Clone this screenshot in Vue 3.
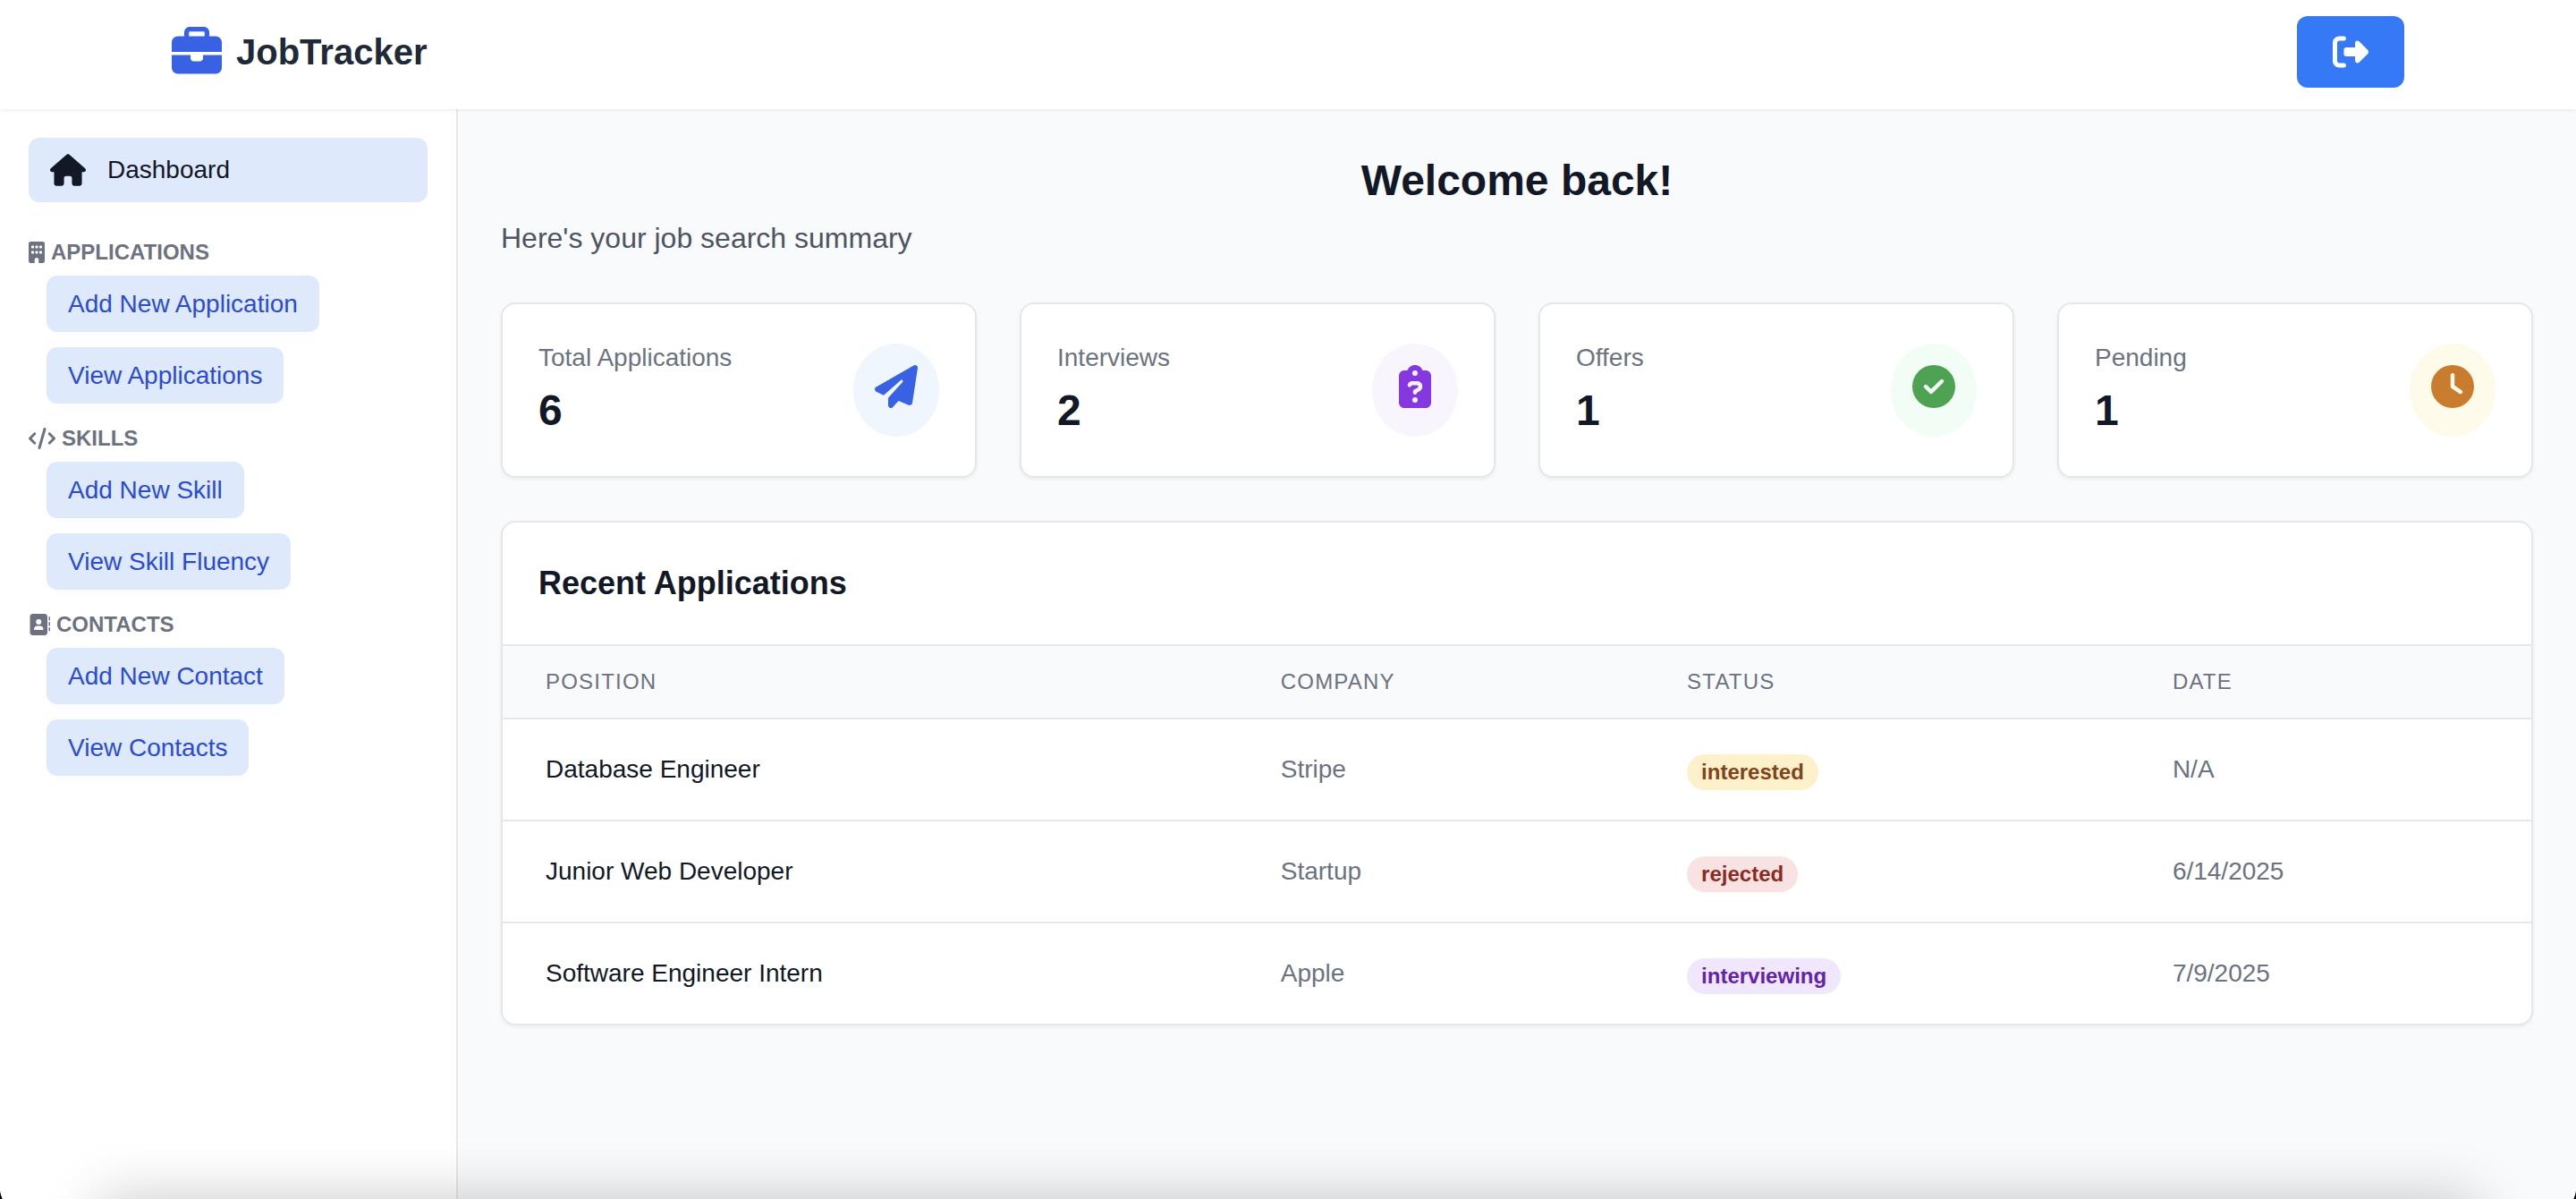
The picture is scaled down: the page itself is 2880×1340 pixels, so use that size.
<script setup>
const icons = {
  briefcase: {
    box: '0 0 512 512',
    d: 'M184 48l144 0c4.4 0 8 3.6 8 8l0 40L176 96l0-40c0-4.4 3.6-8 8-8zm-56 8l0 40L64 96C28.7 96 0 124.7 0 160l0 96 192 0 128 0 192 0 0-96c0-35.3-28.7-64-64-64l-64 0 0-40c0-30.9-25.1-56-56-56L184 0c-30.9 0-56 25.1-56 56zM512 288l-192 0 0 32c0 17.7-14.3 32-32 32l-64 0c-17.7 0-32-14.3-32-32l0-32L0 288 0 416c0 35.3 28.7 64 64 64l384 0c35.3 0 64-28.7 64-64l0-128z',
  },
  logout: {
    box: '0 0 512 512',
    d: 'M377.9 105.9L500.7 228.7c7.2 7.2 11.3 17.1 11.3 27.3s-4.1 20.1-11.3 27.3L377.9 406.1c-6.4 6.4-15 9.9-24 9.9c-18.7 0-33.9-15.2-33.9-33.9l0-62.1-128 0c-17.7 0-32-14.3-32-32l0-64c0-17.7 14.3-32 32-32l128 0 0-62.1c0-18.7 15.2-33.9 33.9-33.9c9 0 17.6 3.6 24 9.9zM160 96L96 96c-17.7 0-32 14.3-32 32l0 256c0 17.7 14.3 32 32 32l64 0c17.7 0 32 14.3 32 32s-14.3 32-32 32l-64 0c-53 0-96-43-96-96L0 128C0 75 43 32 96 32l64 0c17.7 0 32 14.3 32 32s-14.3 32-32 32z',
  },
  house: {
    box: '0 0 576 512',
    d: 'M575.8 255.5c0 18-15 32.1-32 32.1h-32l.7 160.2c0 2.7-.2 5.4-.5 8.1V472c0 22.1-17.9 40-40 40H456c-1.1 0-2.2 0-3.3-.1c-1.4 .1-2.8 .1-4.2 .1H416 392c-22.1 0-40-17.9-40-40V448 384c0-17.7-14.3-32-32-32H256c-17.7 0-32 14.3-32 32v64 24c0 22.1-17.9 40-40 40H160 128.1c-1.5 0-3-.1-4.5-.2c-1.2 .1-2.4 .2-3.6 .2H104c-22.1 0-40-17.9-40-40V360c0-.9 0-1.9 .1-2.8V287.6H32c-18 0-32-14-32-32.1c0-9 3-17 10-24L266.4 8c7-7 15-8 22-8s15 2 21 7L564.8 231.5c8 7 12 15 11 24z',
  },
}

const sections = [
  {
    title: 'APPLICATIONS',
    box: '0 0 384 512',
    width: 18,
    d: 'M48 0C21.5 0 0 21.5 0 48L0 464c0 26.5 21.5 48 48 48l96 0 0-80c0-26.5 21.5-48 48-48s48 21.5 48 48l0 80 96 0c26.5 0 48-21.5 48-48l0-416c0-26.5-21.5-48-48-48L48 0zM64 240c0-8.8 7.2-16 16-16l32 0c8.8 0 16 7.2 16 16l0 32c0 8.8-7.2 16-16 16l-32 0c-8.8 0-16-7.2-16-16l0-32zm112-16l32 0c8.8 0 16 7.2 16 16l0 32c0 8.8-7.2 16-16 16l-32 0c-8.8 0-16-7.2-16-16l0-32c0-8.8 7.2-16 16-16zm80 16c0-8.8 7.2-16 16-16l32 0c8.8 0 16 7.2 16 16l0 32c0 8.8-7.2 16-16 16l-32 0c-8.8 0-16-7.2-16-16l0-32zM80 96l32 0c8.8 0 16 7.2 16 16l0 32c0 8.8-7.2 16-16 16l-32 0c-8.8 0-16-7.2-16-16l0-32c0-8.8 7.2-16 16-16zm80 16c0-8.8 7.2-16 16-16l32 0c8.8 0 16 7.2 16 16l0 32c0 8.8-7.2 16-16 16l-32 0c-8.8 0-16-7.2-16-16l0-32zM272 96l32 0c8.8 0 16 7.2 16 16l0 32c0 8.8-7.2 16-16 16l-32 0c-8.8 0-16-7.2-16-16l0-32c0-8.8 7.2-16 16-16z',
    links: ['Add New Application', 'View Applications'],
  },
  {
    title: 'SKILLS',
    box: '0 0 640 512',
    width: 30,
    d: 'M392.8 1.2c-17-4.9-34.7 5-39.6 22l-128 448c-4.9 17 5 34.7 22 39.6s34.7-5 39.6-22l128-448c4.9-17-5-34.7-22-39.6zm80.6 120.1c-12.5 12.5-12.5 32.8 0 45.3L562.7 256l-89.4 89.4c-12.5 12.5-12.5 32.8 0 45.3s32.8 12.5 45.3 0l112-112c12.5-12.5 12.5-32.8 0-45.3l-112-112c-12.5-12.5-32.8-12.5-45.3 0zm-306.7 0c-12.5-12.5-32.8-12.5-45.3 0l-112 112c-12.5 12.5-12.5 32.8 0 45.3l112 112c12.5 12.5 32.8 12.5 45.3 0s12.5-32.8 0-45.3L77.3 256l89.4-89.4c12.5-12.5 12.5-32.8 0-45.3z',
    links: ['Add New Skill', 'View Skill Fluency'],
  },
  {
    title: 'CONTACTS',
    box: '0 0 512 512',
    width: 24,
    d: 'M96 0C60.7 0 32 28.7 32 64l0 384c0 35.3 28.7 64 64 64l288 0c35.3 0 64-28.7 64-64l0-384c0-35.3-28.7-64-64-64L96 0zM208 288l64 0c44.2 0 80 35.8 80 80c0 8.8-7.2 16-16 16l-192 0c-8.8 0-16-7.2-16-16c0-44.2 35.8-80 80-80zm-32-96a64 64 0 1 1 128 0 64 64 0 1 1 -128 0zM512 80c0-8.8-7.2-16-16-16s-16 7.2-16 16l0 64c0 8.8 7.2 16 16 16s16-7.2 16-16l0-64zM496 192c-8.8 0-16 7.2-16 16l0 64c0 8.8 7.2 16 16 16s16-7.2 16-16l0-64c0-8.8-7.2-16-16-16zm16 144c0-8.8-7.2-16-16-16s-16 7.2-16 16l0 64c0 8.8 7.2 16 16 16s16-7.2 16-16l0-64z',
    links: ['Add New Contact', 'View Contacts'],
  },
]

const stats = [
  {
    label: 'Total Applications',
    value: 6,
    tone: 'blue',
    box: '0 0 512 512',
    d: 'M498.1 5.6c10.1 7 15.4 19.1 13.5 31.2l-64 416c-1.5 9.7-7.4 18.2-16 23s-18.9 5.4-28 1.6L284 427.7l-68.5 74.1c-8.9 9.7-22.9 12.9-35.2 8.1S160 493.2 160 480l0-83.6c0-4 1.5-7.8 4.2-10.8L331.8 202.8c5.8-6.3 5.6-16-.4-22s-15.7-6.4-22-.7L106 360.8 17.7 316.6C7.1 311.3 .3 300.7 0 288.9s5.9-22.8 16.1-28.7l448-256c10.7-6.1 23.9-5.5 34 1.4z',
  },
  {
    label: 'Interviews',
    value: 2,
    tone: 'purple',
    box: '0 0 384 512',
    d: 'M192 0c-41.8 0-77.4 26.7-90.5 64L64 64C28.7 64 0 92.7 0 128L0 448c0 35.3 28.7 64 64 64l256 0c35.3 0 64-28.7 64-64l0-320c0-35.3-28.7-64-64-64l-37.5 0C269.4 26.7 233.8 0 192 0zm0 64a32 32 0 1 1 0 64 32 32 0 1 1 0-64zM105.8 229.3c7.9-22.3 29.1-37.3 52.8-37.3l58.3 0c34.9 0 63.1 28.3 63.1 63.1c0 22.6-12.1 43.5-31.7 54.8L216 328.4c-.2 13-10.9 23.6-24 23.6c-13.3 0-24-10.7-24-24l0-13.5c0-8.6 4.6-16.5 12.1-20.8l44.3-25.4c4.7-2.7 7.6-7.7 7.6-13.1c0-8.4-6.8-15.1-15.1-15.1l-58.3 0c-3.4 0-6.4 2.1-7.5 5.3l-.4 1.2c-4.4 12.5-18.2 19-30.7 14.6s-19-18.2-14.6-30.7l.4-1.2zM160 416a32 32 0 1 1 64 0 32 32 0 1 1 -64 0z',
  },
  {
    label: 'Offers',
    value: 1,
    tone: 'green',
    box: '0 0 512 512',
    d: 'M256 512A256 256 0 1 0 256 0a256 256 0 1 0 0 512zM369 209L241 337c-9.4 9.4-24.6 9.4-33.9 0l-64-64c-9.4-9.4-9.4-24.6 0-33.9s24.6-9.4 33.9 0l47 47L335 175c9.4-9.4 24.6-9.4 33.9 0s9.4 24.6 0 33.9z',
  },
  {
    label: 'Pending',
    value: 1,
    tone: 'amber',
    box: '0 0 512 512',
    d: 'M256 0a256 256 0 1 1 0 512A256 256 0 1 1 256 0zM232 120l0 136c0 8 4 15.5 10.7 20l96 64c11 7.4 25.9 4.4 33.3-6.7s4.4-25.9-6.7-33.3L280 243.2 280 120c0-13.3-10.7-24-24-24s-24 10.7-24 24z',
  },
]

const applications = [
  { position: 'Database Engineer', company: 'Stripe', status: 'interested', date: 'N/A' },
  { position: 'Junior Web Developer', company: 'Startup', status: 'rejected', date: '6/14/2025' },
  { position: 'Software Engineer Intern', company: 'Apple', status: 'interviewing', date: '7/9/2025' },
]
</script>

<template>
  <div class="app">
    <header class="topbar">
      <a class="brand" href="#">
        <svg class="brand-icon" :viewBox="icons.briefcase.box" aria-hidden="true"><path :d="icons.briefcase.d" /></svg>
        <span>JobTracker</span>
      </a>
      <button class="logout" type="button" aria-label="Log out">
        <svg :viewBox="icons.logout.box" aria-hidden="true"><path :d="icons.logout.d" /></svg>
      </button>
    </header>

    <div class="body">
      <nav class="sidebar">
        <a class="dashboard" href="#">
          <svg :viewBox="icons.house.box" aria-hidden="true"><path :d="icons.house.d" /></svg>
          <span>Dashboard</span>
        </a>
        <section v-for="section in sections" :key="section.title" class="group">
          <h2 class="group-title">
            <svg :viewBox="section.box" :width="section.width" height="24" aria-hidden="true"><path :d="section.d" /></svg>
            <span>{{ section.title }}</span>
          </h2>
          <ul class="links">
            <li v-for="link in section.links" :key="link">
              <a class="link" href="#">{{ link }}</a>
            </li>
          </ul>
        </section>
      </nav>

      <main class="main">
        <h1 class="welcome">Welcome back!</h1>
        <p class="summary">Here's your job search summary</p>

        <div class="stats">
          <article v-for="stat in stats" :key="stat.label" class="card stat">
            <div>
              <p class="stat-label">{{ stat.label }}</p>
              <p class="stat-value">{{ stat.value }}</p>
            </div>
            <div class="chip" :class="stat.tone">
              <svg :viewBox="stat.box" aria-hidden="true"><path :d="stat.d" /></svg>
            </div>
          </article>
        </div>

        <section class="card recent">
          <h2 class="recent-title">Recent Applications</h2>
          <table class="table">
            <thead>
              <tr>
                <th class="col-position" scope="col">POSITION</th>
                <th class="col-company" scope="col">COMPANY</th>
                <th class="col-status" scope="col">STATUS</th>
                <th scope="col">DATE</th>
              </tr>
            </thead>
            <tbody>
              <tr v-for="row in applications" :key="row.position">
                <td class="position">{{ row.position }}</td>
                <td>{{ row.company }}</td>
                <td><span class="pill" :class="row.status">{{ row.status }}</span></td>
                <td>{{ row.date }}</td>
              </tr>
            </tbody>
          </table>
        </section>
      </main>
    </div>
    <div class="window-edge" aria-hidden="true"></div>
  </div>
</template>

<style>
body {
  margin: 0;
  background: #f9fafc;
}
</style>

<style scoped>
.app {
  display: flex;
  flex-direction: column;
  min-height: 100vh;
  background: #f9fafc;
  color: #121826;
  font-family: "Liberation Sans", Arial, sans-serif;
  font-size: 28px;
}
svg {
  display: block;
  flex: none;
  fill: currentColor;
}
h1,
h2,
p,
ul {
  margin: 0;
  padding: 0;
}
a {
  text-decoration: none;
}

.topbar {
  position: relative;
  display: flex;
  align-items: center;
  justify-content: space-between;
  padding: 18px 192px 24px;
  background: #fff;
  box-shadow: 0 2px 4px rgba(0, 0, 0, 0.06);
}
.brand {
  display: flex;
  align-items: center;
  gap: 16px;
  color: #202938;
  font-size: 40px;
  font-weight: 700;
  line-height: 56px;
}
.brand-icon {
  width: 56px;
  height: 56px;
  color: #3862e3;
}
.logout {
  display: flex;
  align-items: center;
  justify-content: center;
  width: 120px;
  height: 80px;
  padding: 0;
  border: 0;
  border-radius: 12px;
  background: #3679f7;
  color: #fff;
  cursor: pointer;
}
.logout svg {
  width: 40px;
  height: 40px;
}

.body {
  display: flex;
  flex: 1;
}
.sidebar {
  box-sizing: border-box;
  flex: none;
  width: 512px;
  padding: 32px;
  border-right: 2px solid #e5e7eb;
  background: #fff;
}
.dashboard {
  display: flex;
  align-items: center;
  gap: 24px;
  height: 72px;
  margin-bottom: 40px;
  padding: 0 24px;
  border-radius: 12px;
  background: #dee9fc;
  color: #121826;
}
.dashboard svg {
  width: 40px;
  height: 36px;
}
.group {
  margin-bottom: 23px;
}
.group-title {
  display: flex;
  align-items: center;
  gap: 7px;
  color: #6c7280;
  font-size: 24px;
  line-height: 32px;
}
.links {
  display: flex;
  flex-direction: column;
  align-items: flex-start;
  gap: 17px;
  padding: 10px 0 0 20px;
  list-style: none;
}
.link {
  display: block;
  padding: 0 24px;
  border-radius: 12px;
  background: #dee9fc;
  color: #2a4bd1;
  line-height: 63px;
}

.main {
  flex: 1;
  min-width: 0;
  padding: 48px;
}
.welcome {
  font-size: 48px;
  line-height: 64px;
  text-align: center;
}
.summary {
  margin: 8px 0 48px;
  color: #4c5563;
  font-size: 32px;
  line-height: 48px;
}
.card {
  border: 2px solid #e5e7eb;
  border-radius: 16px;
  background: #fff;
  box-shadow: 0 2px 4px rgba(0, 0, 0, 0.06);
}
.stats {
  display: grid;
  grid-template-columns: repeat(4, 1fr);
  gap: 48px;
  margin-bottom: 48px;
}
.stat {
  display: flex;
  align-items: center;
  justify-content: space-between;
  padding: 40px;
}
.stat-label {
  margin-bottom: 6px;
  color: #6c7280;
  line-height: 40px;
}
.stat-value {
  font-size: 48px;
  font-weight: 700;
  line-height: 66px;
}
.chip {
  display: flex;
  justify-content: center;
  width: 48px;
  padding: 24px 24px 32px;
  border-radius: 50%;
}
.chip svg {
  height: 48px;
}
.blue {
  background: #eff6fe;
  color: #3862e3;
}
.purple {
  background: #f8f5fe;
  color: #8638e0;
}
.green {
  background: #f2fdf5;
  color: #4ea254;
}
.amber {
  background: #fefbeb;
  color: #c97b2e;
}

.recent {
  overflow: hidden;
}
.recent-title {
  padding: 40px;
  border-bottom: 2px solid #e5e7eb;
  font-size: 36px;
  line-height: 56px;
}
.table {
  width: 100%;
  border-collapse: separate;
  border-spacing: 0;
  table-layout: fixed;
}
.table th {
  height: 80px;
  padding: 0 48px;
  border-bottom: 2px solid #e5e7eb;
  background: #f9fafc;
  color: #6c7280;
  font-size: 24px;
  font-weight: 400;
  letter-spacing: 0.05em;
  text-align: left;
}
.col-position {
  width: 32%;
}
.col-company {
  width: 15.8%;
}
.col-status {
  width: 19.7%;
}
.table td {
  height: 112px;
  padding: 0 48px;
  border-bottom: 2px solid #e5e7eb;
  color: #6c7280;
}
.table tbody tr:last-child td {
  border-bottom: 0;
}
.table .position {
  color: #121826;
}
.pill {
  display: block;
  width: fit-content;
  margin-top: 6px;
  padding: 0 16px;
  border-radius: 20px;
  font-size: 24px;
  font-weight: 700;
  line-height: 40px;
}
.interested {
  background: #fcf1cb;
  color: #83421a;
}
.rejected {
  background: #f8e2e2;
  color: #8b2a22;
}
.interviewing {
  background: #f0e7fd;
  color: #6124a8;
}

/* Soft shade along the bottom of the window, with its rounded corners */
.window-edge {
  position: fixed;
  inset: auto 0 0;
  height: 140px;
  overflow: hidden;
  pointer-events: none;
}
.window-edge::before {
  content: "";
  position: absolute;
  top: 100%;
  right: 112px;
  left: 112px;
  height: 140px;
  box-shadow: 0 0 64px rgba(0, 0, 0, 0.22);
}
.window-edge::after {
  content: "";
  position: absolute;
  right: 0;
  bottom: 0;
  left: 0;
  height: 15px;
  background:
    radial-gradient(circle at 36px 0, transparent 36px, #000 37px) left / 6px 15px no-repeat,
    radial-gradient(circle at -30px 0, transparent 36px, #000 37px) right / 6px 15px no-repeat;
}
</style>
